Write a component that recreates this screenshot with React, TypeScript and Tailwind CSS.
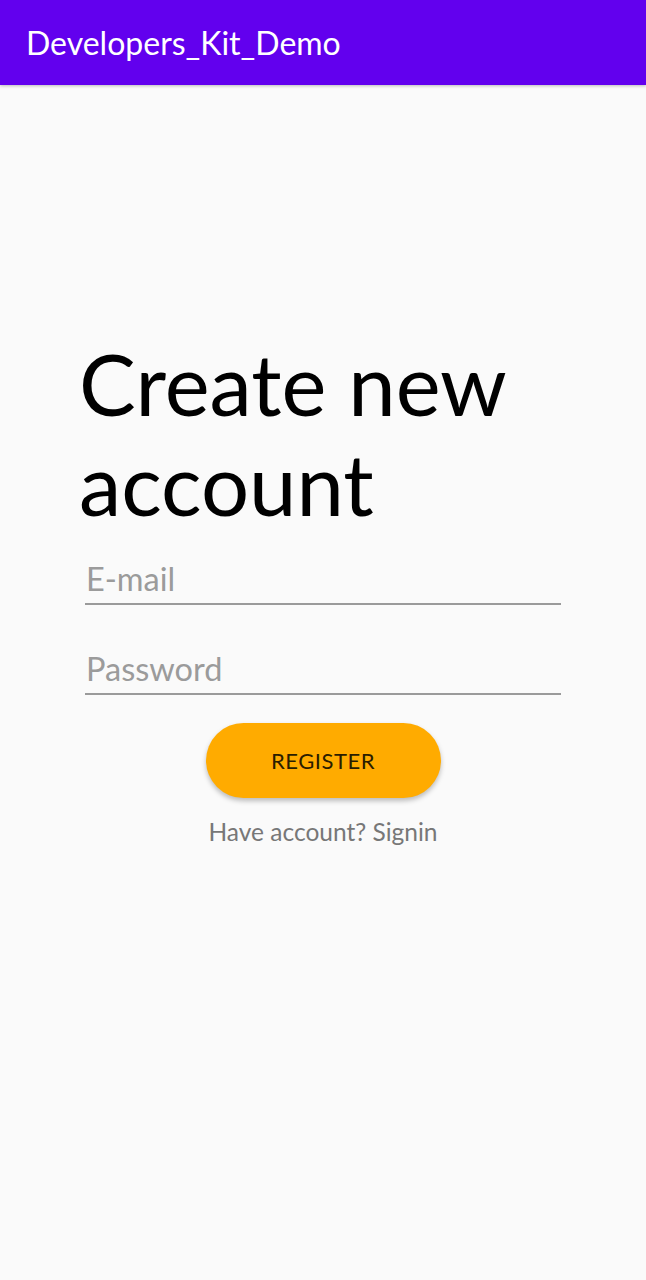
import React from 'react';

const font = { fontFamily: 'Lato, "Noto Sans", sans-serif' };

const UnderlineField = ({ placeholder, type }: { placeholder: string; type: string }) => (
    <div className="w-full border-b-2 border-[#9a9a9a]">
        <input
            type={type}
            placeholder={placeholder}
            className="w-full bg-transparent outline-none text-[32.5px] leading-[44px] pl-[1px] pb-[2px] text-[#333] placeholder:text-[#9b9b9b]"
            style={font}
        />
    </div>
);

export default function App() {
    return (
        <div className="min-h-[1280px] w-full bg-[#fafafa] flex flex-col" style={font}>
            <header className="h-[85px] bg-[#6200ee] flex items-center px-[26px] shadow-[0_1px_3px_rgba(0,0,0,0.25)]">
                <h1 className="text-[32px] text-white leading-none">Developers_Kit_Demo</h1>
            </header>

            <main className="flex flex-col items-center px-[85px] pt-[248px]">
                <h2 className="self-start -ml-[6px] text-[85px] leading-[100px] text-black">
                    Create new account
                </h2>
                <div className="w-full mt-[24px] flex flex-col gap-[42px]">
                    <UnderlineField placeholder="E-mail" type="email" />
                    <UnderlineField placeholder="Password" type="password" />
                </div>
                <button className="mt-[28px] w-[235px] h-[75px] rounded-full bg-[#ffab00] text-[22px] text-[#2a1d00] tracking-wide shadow-[0_3px_5px_rgba(0,0,0,0.25)]">
                    REGISTER
                </button>
                <p className="mt-[16px] text-[24.5px] text-[#777]">Have account? Signin</p>
            </main>
        </div>
    );
}
